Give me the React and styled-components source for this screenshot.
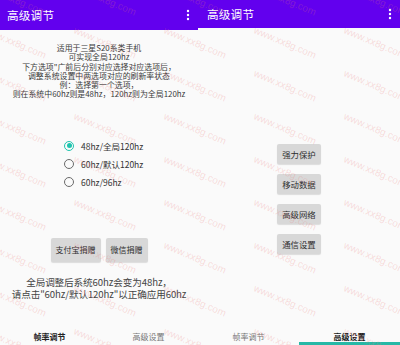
import React, { useState } from 'react';
import styled, { createGlobalStyle } from 'styled-components';

const GlobalStyle = createGlobalStyle`
  html, body {
    margin: 0;
    padding: 0;
    background: #fafafa;
  }
  body {
    font-family: "Noto Sans CJK SC", "Liberation Sans", sans-serif;
  }
`;

const Screen = styled.div`
  position: relative;
  width: 400px;
  height: 345px;
  display: flex;
  overflow: hidden;
  background: #fafafa;
`;

const Panel = styled.div`
  width: ${(p) => p.$w}px;
  height: 345px;
  display: flex;
  flex-direction: column;
  flex-shrink: 0;
`;

const Header = styled.div`
  height: ${(p) => p.$h}px;
  background: #6200ee;
  display: flex;
  align-items: center;
  justify-content: space-between;
  padding: 0 8px 0 ${(p) => p.$pl}px;
  flex-shrink: 0;
`;

const Title = styled.div`
  color: #fff;
  font-size: 11.6px;
  line-height: 14px;
  letter-spacing: 0.2px;
`;

const Intro = styled.div`
  margin-top: 13px;
  text-align: center;
  font-size: 7.9px;
  line-height: 9.3px;
  color: #3a3a3a;
  white-space: nowrap;
`;

const RadioGroup = styled.div`
  margin-top: 38px;
  padding-left: 64px;
  display: flex;
  flex-direction: column;
`;

const RadioRow = styled.label`
  height: 18px;
  display: flex;
  align-items: center;
  gap: 7px;
  font-size: 8.5px;
  color: #333;
  cursor: pointer;
`;

const RadioCircle = styled.span`
  width: 10px;
  height: 10px;
  box-sizing: border-box;
  border-radius: 50%;
  border: 1.4px solid ${(p) => (p.$on ? '#1fc4ae' : '#6a6a6a')};
  display: flex;
  align-items: center;
  justify-content: center;
  &::after {
    content: '';
    width: 5px;
    height: 5px;
    border-radius: 50%;
    background: ${(p) => (p.$on ? '#1fc4ae' : 'transparent')};
  }
`;

const ButtonRow = styled.div`
  margin-top: 47px;
  display: flex;
  justify-content: center;
  gap: 5px;
`;

const GreyButton = styled.button`
  height: ${(p) => p.$h || 24}px;
  padding: 0 ${(p) => p.$px || 5}px;
  border: none;
  border-radius: 2px;
  background: #d8d8d8;
  box-shadow: 0 1px 1px rgba(0, 0, 0, 0.12);
  color: #2e2e2e;
  font-family: "Noto Sans CJK SC", "Liberation Sans", sans-serif;
  font-size: ${(p) => p.$fs || 8}px;
  line-height: 1;
  white-space: nowrap;
`;

const Note = styled.div`
  margin-top: 14px;
  text-align: center;
  font-size: 9.6px;
  line-height: 12px;
  color: #444;
  white-space: nowrap;
  letter-spacing: -0.1px;
`;

const ButtonColumn = styled.div`
  margin-top: 116px;
  display: flex;
  flex-direction: column;
  align-items: center;
  gap: 10px;
`;

const TabBar = styled.div`
  margin-top: auto;
  height: 22px;
  display: flex;
  flex-shrink: 0;
`;

const Tab = styled.div`
  flex: 1;
  box-sizing: border-box;
  padding-top: 8px;
  text-align: center;
  font-size: 8px;
  line-height: 11px;
  color: ${(p) => (p.$active ? '#222' : '#777')};
  font-weight: ${(p) => (p.$active ? 700 : 400)};
  border-bottom: 3px solid ${(p) => (p.$line ? '#26b8a6' : 'transparent')};
`;

const Watermarks = styled.div`
  position: absolute;
  inset: 0;
  overflow: hidden;
  pointer-events: none;
`;

const MarkGrid = styled.div`
  margin: -22px 0 0 -30px;
  display: grid;
  grid-template-columns: repeat(6, 90px);
  grid-auto-rows: 43px;
`;

const Mark = styled.span`
  display: flex;
  align-items: center;
  justify-content: center;
  font-family: "Liberation Sans", sans-serif;
  font-size: 10px;
  color: rgba(235, 120, 120, 0.24);
  transform: rotate(23deg);
  white-space: nowrap;
`;

function MenuDots() {
  return (
    <svg width="4" height="12" viewBox="0 0 4 12">
      <circle cx="2" cy="2" r="1.2" fill="#fff" />
      <circle cx="2" cy="6" r="1.2" fill="#fff" />
      <circle cx="2" cy="10" r="1.2" fill="#fff" />
    </svg>
  );
}

const options = ['48hz/全局120hz', '60hz/默认120hz', '60hz/96hz'];

const intro = [
  '适用于三星S20系类手机',
  '可实现全局120hz',
  '下方选项"广前后分别对应选择对应选项后，',
  '调整系统设置中两选项对应的刷新率状态',
  '例：选择第一个选项，',
  '则在系统中60hz则是48hz，120hz则为全局120hz',
];

export default function App() {
  const [picked, setPicked] = useState(0);

  return (
    <Screen>
      <GlobalStyle />
      <Panel $w={198}>
        <Header $h={30} $pl={7}>
          <Title>高级调节</Title>
          <MenuDots />
        </Header>
        <Intro>
          {intro.map((line) => (
            <div key={line}>{line}</div>
          ))}
        </Intro>
        <RadioGroup>
          {options.map((opt, i) => (
            <RadioRow key={opt} onClick={() => setPicked(i)}>
              <RadioCircle $on={picked === i} />
              {opt}
            </RadioRow>
          ))}
        </RadioGroup>
        <ButtonRow>
          <GreyButton>支付宝捐赠</GreyButton>
          <GreyButton>微信捐赠</GreyButton>
        </ButtonRow>
        <Note>
          <div>全局调整后系统60hz会变为48hz，</div>
          <div>请点击"60hz/默认120hz"以正确应用60hz</div>
        </Note>
        <TabBar>
          <Tab $active>帧率调节</Tab>
          <Tab>高级设置</Tab>
        </TabBar>
      </Panel>

      <Panel $w={202}>
        <Header $h={28} $pl={9}>
          <Title>高级调节</Title>
          <MenuDots />
        </Header>
        <ButtonColumn>
          <GreyButton $h={20} $px={5} $fs={8.4}>强力保护</GreyButton>
          <GreyButton $h={20} $px={5} $fs={8.4}>移动数据</GreyButton>
          <GreyButton $h={20} $px={5} $fs={8.4}>高级网络</GreyButton>
          <GreyButton $h={20} $px={5} $fs={8.4}>通信设置</GreyButton>
        </ButtonColumn>
        <TabBar>
          <Tab>帧率调节</Tab>
          <Tab $active $line>高级设置</Tab>
        </TabBar>
      </Panel>

      <Watermarks>
        <MarkGrid>
          {[...Array(54)].map((_, i) => (
            <Mark key={i}>www.xx8g.com</Mark>
          ))}
        </MarkGrid>
      </Watermarks>
    </Screen>
  );
}
